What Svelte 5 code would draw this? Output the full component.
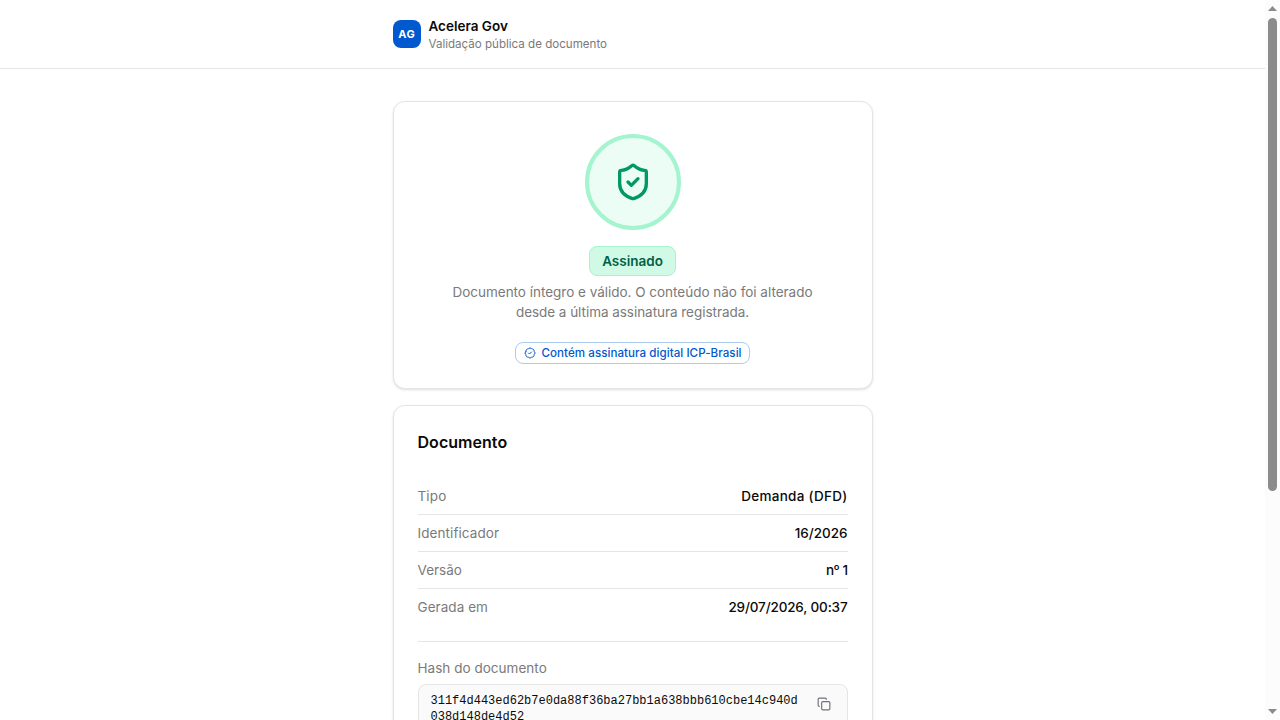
<script>
  const rows = [
    { label: 'Tipo', value: 'Demanda (DFD)', ls: 0.15, vs: 0.29 },
    { label: 'Identificador', value: '16/2026', ls: 0.08, vs: -0.02 },
    { label: 'Versão', value: 'nº 1', ls: 0, vs: -0.5 },
    { label: 'Gerada em', value: '29/07/2026, 00:37', ls: 0.06, vs: -0.15 },
  ];
</script>

<div class="window">
  <div class="page">
    <header>
      <div class="brand">
        <div class="logo">AG</div>
        <div>
          <div class="name">Acelera Gov</div>
          <div class="sub">Validação pública de documento</div>
        </div>
      </div>
    </header>
    <main>
      <section class="card status">
        <div class="seal">
          <svg width="40" height="40" viewBox="0 0 24 24" fill="none" stroke="currentColor" stroke-width="2" stroke-linecap="round" stroke-linejoin="round">
            <path d="M20 13c0 5-3.5 7.5-7.66 8.95a1 1 0 0 1-.67-.01C7.5 20.5 4 18 4 13V6a1 1 0 0 1 1-1c2 0 4.5-1.2 6.24-2.72a1.17 1.17 0 0 1 1.52 0C14.51 3.81 17 5 19 5a1 1 0 0 1 1 1z" />
            <path d="m9 12 2 2 4-4" />
          </svg>
        </div>
        <div class="badge">Assinado</div>
        <p><span class="l1">Documento íntegro e válido. O conteúdo não foi alterado</span><br /><span class="l2">desde a última assinatura registrada.</span></p>
        <div class="icp">
          <svg width="12" height="12" viewBox="0 0 24 24" fill="none" stroke="currentColor" stroke-width="2" stroke-linecap="round" stroke-linejoin="round">
            <path d="M3.85 8.62a4 4 0 0 1 4.78-4.77 4 4 0 0 1 6.74 0 4 4 0 0 1 4.78 4.78 4 4 0 0 1 0 6.74 4 4 0 0 1-4.77 4.78 4 4 0 0 1-6.75 0 4 4 0 0 1-4.78-4.77 4 4 0 0 1 0-6.76Z" />
            <path d="m9 12 2 2 4-4" />
          </svg>
          <span>Contém assinatura digital ICP-Brasil</span>
        </div>
      </section>
      <section class="card doc">
        <h2>Documento</h2>
        <dl>
          {#each rows as r}
            <div class="row">
              <dt style="letter-spacing: {r.ls}px">{r.label}</dt>
              <dd style="letter-spacing: {r.vs}px">{r.value}</dd>
            </div>
          {/each}
        </dl>
        <hr />
        <div class="hashlabel">Hash do documento</div>
        <div class="hash">
          <code>311f4d443ed62b7e0da88f36ba27bb1a638bbb610cbe14c940d038d148de4d52</code>
          <button aria-label="Copiar">
            <svg width="14" height="14" viewBox="0 0 24 24" fill="none" stroke="currentColor" stroke-width="2" stroke-linecap="round" stroke-linejoin="round">
              <rect width="14" height="14" x="8" y="8" rx="2" />
              <path d="M4 16c-1.1 0-2-.9-2-2V4c0-1.1.9-2 2-2h10c1.1 0 2 .9 2 2" />
            </svg>
          </button>
        </div>
      </section>
    </main>
  </div>
  <div class="scroll">
    <svg width="9" height="5" viewBox="0 0 9 5"><path d="M4.5 0 9 5H0z" /></svg>
    <div class="thumb"></div>
    <svg class="down" width="9" height="5" viewBox="0 0 9 5"><path d="M0 0h9L4.5 5z" /></svg>
  </div>
</div>

<style>
  :global(body) { overflow: hidden; }
  .window { display: flex; width: 1280px; height: 720px; overflow: hidden; background: #fff; color: #0a0a0a; font-family: Inter, sans-serif; font-size: 13.5px; line-height: 20px; }
  .window * { box-sizing: border-box; }
  .page { width: 1265px; height: 720px; overflow: hidden; }
  header { height: 69px; border-bottom: 1px solid #e5e5e5; padding-top: 16px; }
  .brand { width: 480px; margin: 0 auto; display: flex; align-items: center; gap: 8px; height: 36px; }
  .logo { width: 28px; height: 28px; border-radius: 8px; background: #0059cf; color: #fff; font-weight: 700; font-size: 11px; letter-spacing: 0.5px; padding-left: 0.5px; line-height: 28px; text-align: center; }
  .name { font-weight: 600; line-height: 20px; }
  .sub { font-size: 11.6px; line-height: 16px; color: #7a7a7a; letter-spacing: -0.01px; }
  main { width: 480px; margin: 32px auto 0; display: flex; flex-direction: column; gap: 16px; }
  .card { border: 1px solid #e5e5e5; border-radius: 12px; box-shadow: 0 1px 3px rgba(0,0,0,.1), 0 1px 2px -1px rgba(0,0,0,.1); background: #fff; }
  .status { height: 288px; padding-top: 32px; display: flex; flex-direction: column; align-items: center; }
  .seal { width: 96px; height: 96px; border-radius: 50%; border: 4px solid #a4f4cf; background: #ecfdf5; color: #009966; display: flex; align-items: center; justify-content: center; flex: none; }
  .badge { width: 87px; height: 30px; margin-top: 16px; border: 1px solid #a4f4cf; border-radius: 8px; background: #d0fae5; color: #006045; font-weight: 600; line-height: 28px; text-align: center; flex: none; }
  p { margin: 6px 0 0; color: #7a7a7a; text-align: center; white-space: nowrap; }
  .l1 { letter-spacing: -0.015px; }
  .l2 { letter-spacing: -0.04px; }
  .icp { width: 235px; height: 22px; margin-top: 20px; border: 1px solid #accbf1; border-radius: 8px; color: #0059cf; display: flex; align-items: center; padding-left: 8px; gap: 5.5px; font-size: 11.6px; font-weight: 500; white-space: nowrap; letter-spacing: 0.04px; }
  .icp svg { flex: none; }
  .doc { height: 460px; padding: 24px; }
  h2 { margin: 0; font-size: 16px; line-height: 24px; font-weight: 600; letter-spacing: 0.04px; }
  dl { margin: 24px 0 0; }
  .row { display: flex; justify-content: space-between; height: 37px; padding-top: 8px; border-bottom: 1px solid #e5e5e5; }
  .row:last-child { border-bottom: 0; }
  dt { color: #7a7a7a; }
  dd { margin: 0; font-weight: 500; }
  hr { border: 0; height: 1px; background: #e5e5e5; margin: 15px 0 16px; }
  .hashlabel { color: #7a7a7a; letter-spacing: 0.03px; }
  .hash { display: flex; gap: 8px; margin-top: 6px; padding: 8px 12px; border: 1px solid #e5e5e5; border-radius: 8px; background: #fafafa; }
  code { flex: 1; font: 12px/16px "Liberation Mono", monospace; word-break: break-all; }
  button { width: 22px; height: 22px; border: 0; padding: 0; background: none; color: #71717b; display: flex; align-items: center; justify-content: center; }
  .scroll { width: 15px; height: 720px; background: #fcfcfc; display: flex; flex-direction: column; align-items: center; padding: 6px 0; fill: #8b8b8b; }
  .thumb { width: 9px; height: 473px; margin-top: 7px; border-radius: 5px; background: #8b8b8b; }
  .down { margin-top: auto; }
</style>
